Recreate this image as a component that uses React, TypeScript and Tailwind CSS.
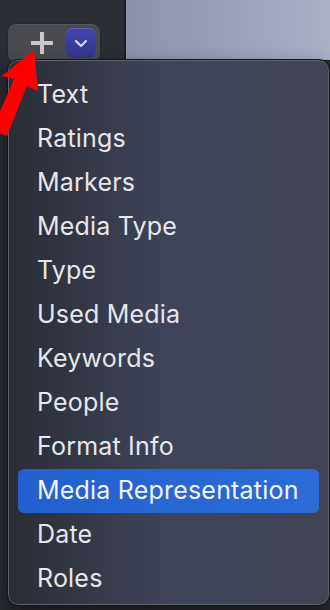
import { useState } from "react";

const items = [
  "Text",
  "Ratings",
  "Markers",
  "Media Type",
  "Type",
  "Used Media",
  "Keywords",
  "People",
  "Format Info",
  "Media Representation",
  "Date",
  "Roles",
];

export default function App() {
  const [selected] = useState("Media Representation");

  return (
    <div className="relative w-[330px] h-[610px] overflow-hidden bg-[#2a2c33] font-['Inter',sans-serif]">
      {/* top strip: sidebar + window behind */}
      <div className="flex h-[61px]">
        <div className="w-[126px] shrink-0 bg-[#2b2d35] border-r-2 border-[#1c1d21] pl-[7px] pt-[23px]">
          <div className="flex items-center w-[94px] h-[40px] rounded-[9px] bg-[#4a4b50] border border-[#26272b] shadow-[inset_0_1px_0_rgba(255,255,255,0.08)]">
            <svg width="24" height="24" viewBox="0 0 24 24" className="ml-[22px]">
              <path d="M12 1v22M1 12h22" stroke="#c9c9cd" strokeWidth="4" />
            </svg>
            <div className="ml-[12px] w-[30px] h-[30px] rounded-[7px] bg-gradient-to-b from-[#4346a8] to-[#33368c] flex items-center justify-center shadow-[inset_0_1px_0_rgba(255,255,255,0.15)]">
              <svg width="14" height="9" viewBox="0 0 14 9">
                <path d="M2 2l5 5 5-5" stroke="#d8d9f0" strokeWidth="2.2" fill="none" strokeLinecap="round" strokeLinejoin="round" />
              </svg>
            </div>
          </div>
        </div>
        <div className="flex-1 bg-gradient-to-r from-[#8b92aa] to-[#aab0c6] border-b border-[#1c1d21]" />
      </div>

      {/* popup menu */}
      <div className="absolute left-[8px] top-[60px] w-[321px] h-[545px] rounded-[10px] border border-[#5e616b] outline outline-1 outline-[#141519] bg-gradient-to-r from-[#2a2d35] via-[#40445a] to-[#404455] pt-[12px] px-[9px] shadow-[0_8px_20px_rgba(0,0,0,0.5)]">
        <ul className="flex flex-col">
          {items.map((item) =>
            item === selected ? (
              <li
                key={item}
                className="h-[44px] flex items-center pl-[19px] rounded-[6px] bg-gradient-to-r from-[#2360cd] to-[#2b6cd9] text-[#f2f4fa] text-[25px] tracking-[0.2px]"
              >
                {item}
              </li>
            ) : (
              <li
                key={item}
                className="h-[44px] flex items-center pl-[19px] text-[#e6e7ea] text-[25px] tracking-[0.2px]"
              >
                {item}
              </li>
            )
          )}
        </ul>
      </div>

      {/* red annotation arrow */}
      <svg className="absolute left-0 top-0" width="60" height="140" viewBox="0 0 60 140">
        <polygon
          points="34,50 38,91 27,86 7,136 -8,130 14,79 2,76"
          fill="#ff0000"
        />
      </svg>
    </div>
  );
}
